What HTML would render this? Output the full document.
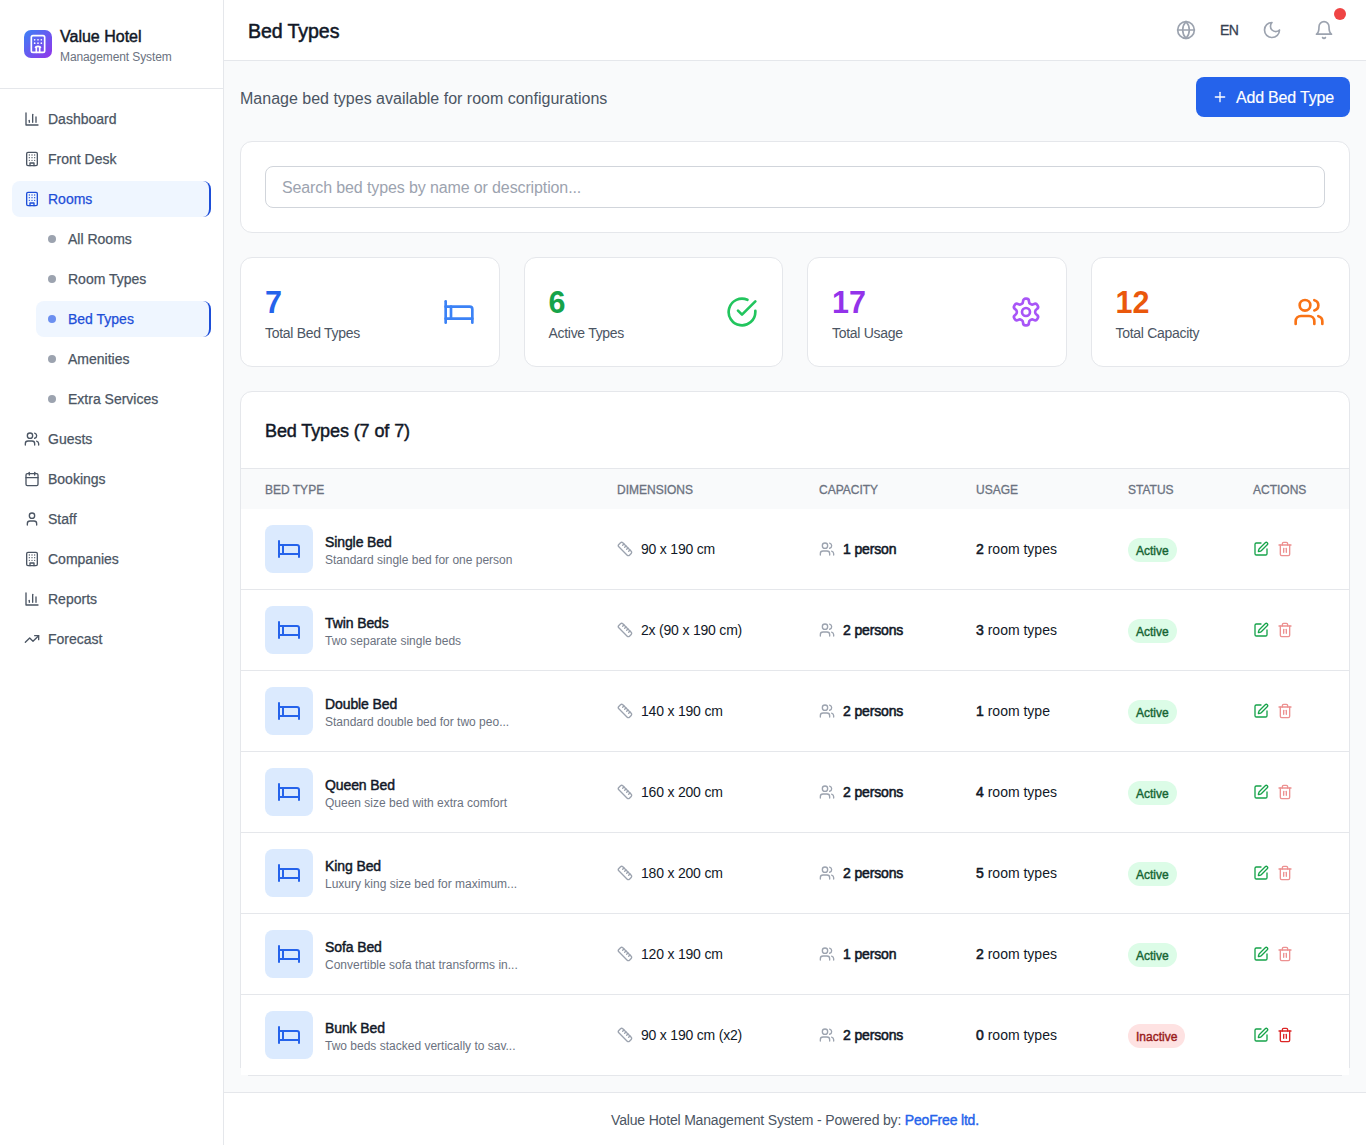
<!DOCTYPE html>
<html><head><meta charset="utf-8"><title>Bed Types</title>
<style>
*{box-sizing:border-box;margin:0;padding:0}
html,body{width:1366px;height:1145px;overflow:hidden}
body{font-family:"Liberation Sans",sans-serif;background:#f9fafb;color:#111827;position:relative}
svg{display:block;fill:none;stroke:currentColor;stroke-width:2;stroke-linecap:round;stroke-linejoin:round}
b,.sb{font-weight:normal;-webkit-text-stroke:0.45px currentColor}
.md{-webkit-text-stroke:0.2px currentColor}
.abs{position:absolute}
#side{position:absolute;left:0;top:0;width:224px;height:1145px;background:#fff;border-right:1px solid #e5e7eb;z-index:2}
#logo{position:absolute;left:0;top:0;width:223px;height:89px;border-bottom:1px solid #e5e7eb}
#lg{left:24px;top:30px;width:28px;height:28px;border-radius:7px;background:linear-gradient(135deg,#3b82f6,#9333ea)}
#lg svg{position:absolute;left:4px;top:4px;width:20px;height:20px;color:#fff}
#lgt1{left:60px;top:27px;font-size:16px;line-height:20px;color:#111827;-webkit-text-stroke:0.45px #111827}
#lgt2{left:60px;top:49px;font-size:12px;line-height:16px;color:#6b7280;letter-spacing:-0.1px}
.nav{position:absolute;left:12px;width:199px;height:36px;border-radius:8px;color:#4b5563;font-size:14px}
.nav svg{position:absolute;left:12px;top:10px;width:16px;height:16px}
.nav span{position:absolute;left:36px;top:0;line-height:36px;white-space:nowrap;-webkit-text-stroke:0.25px currentColor}
.nav.act{background:#eff6ff;color:#1d4ed8;border-right:2px solid #1d4ed8}
.sub{left:36px;width:175px}
.sub i{position:absolute;left:12px;top:14px;width:8px;height:8px;border-radius:50%;background:#9ca3af}
.sub span{left:32px}
.sub.act i{background:#6b8ff0}
#hdr{position:absolute;left:224px;top:0;width:1142px;height:61px;background:#fff;border-bottom:1px solid #e5e7eb}
#ttl{left:24px;top:18px;font-size:19.6px;line-height:26px;color:#111827;letter-spacing:-0.1px;-webkit-text-stroke:0.5px #111827}
.hi{position:absolute;top:20px;width:20px;height:20px;color:#9ca3af}
#en{left:996px;top:20px;font-size:14px;line-height:20px;color:#374151;letter-spacing:-0.5px;-webkit-text-stroke:0.3px #374151}
#dot{left:1110px;top:8px;width:12px;height:12px;border-radius:50%;background:#ef4444}
#desc{left:240px;top:89px;font-size:16px;line-height:20px;color:#4b5563}
#addbtn{left:1196px;top:77px;width:154px;height:40px;border-radius:8px;background:#2563eb;color:#fff;font-size:16px;letter-spacing:-0.2px}
#addbtn svg{position:absolute;left:16px;top:12px;width:16px;height:16px}
#addbtn span{position:absolute;left:40px;top:1px;line-height:40px;white-space:nowrap;-webkit-text-stroke:0.15px #fff}
#search{position:absolute;left:24px;top:24px;width:1060px;height:42px;border:1px solid #d1d5db;border-radius:8px;font-size:16px;line-height:42px;padding-left:16px;color:#9ca3af;letter-spacing:-0.12px}
.card{position:absolute;background:#fff;border:1px solid #e5e7eb;border-radius:12px}
.stat .num{position:absolute;left:24px;top:26px;font-size:30.5px;font-weight:bold;line-height:36px}
.stat .lbl{position:absolute;left:24px;top:65px;font-size:14px;line-height:20px;color:#4b5563;letter-spacing:-0.3px}
.stat svg{position:absolute;right:24px;top:38px;width:32px;height:32px}
#tcard{left:240px;top:391px;width:1110px;height:685px;overflow:hidden;border-radius:12px 12px 0 0}
.cbg{top:1068px;width:8px;height:8px;background:#f9fafb}
.cbg i{position:absolute;left:1px;top:0;width:7px;height:7px;background:#fff}
#tt{height:76px;padding-left:24px;font-size:18px;line-height:78px;color:#111827;letter-spacing:-0.1px;-webkit-text-stroke:0.45px #111827}
table{border-collapse:collapse;width:1108px;table-layout:fixed}
th{height:40px;background:#f9fafb;text-align:left;font-weight:normal;font-size:12px;color:#6b7280;padding-left:24px;border-top:1px solid #e5e7eb;-webkit-text-stroke:0.3px #6b7280;padding-top:3px}
td{height:81px;padding-left:24px;border-top:1px solid #e5e7eb;font-size:14px;color:#111827;vertical-align:middle;white-space:nowrap}
tbody tr:first-child td{border-top:none}
.bt{position:relative;height:48px}
.ib{position:absolute;left:0;top:0;width:48px;height:48px;border-radius:8px;background:#dbeafe;color:#2563eb}
.ib svg{position:absolute;left:12px;top:12px;width:24px;height:24px}
.nm{position:absolute;left:60px;top:7px;font-size:14px;line-height:20px;color:#111827;letter-spacing:-0.1px;-webkit-text-stroke:0.45px #111827}
.ds{position:absolute;left:60px;top:27px;font-size:12px;line-height:16px;color:#6b7280}
.ic{display:flex;align-items:center}
.ic svg{width:16px;height:16px;color:#9ca3af;margin-right:8px}
.ic span{letter-spacing:-0.2px}
.ic b{letter-spacing:-0.15px;-webkit-text-stroke:0.55px #111827}
td>b{-webkit-text-stroke:0.55px #111827}
.badge{display:inline-block;position:relative;top:1px;height:24px;line-height:26px;padding:0 8px;border-radius:12px;font-size:12px;background:#dcfce7;color:#166534;-webkit-text-stroke:0.4px #166534}
.badge.in{background:#fee2e2;color:#991b1b;-webkit-text-stroke:0.4px #991b1b}
.acts{display:flex}
.acts svg{width:16px;height:16px;margin-right:8px}
#foot{position:absolute;left:224px;top:1092px;width:1142px;height:53px;background:#fff;border-top:1px solid #e5e7eb;z-index:1}
#ftxt{position:absolute;left:0;width:100%;top:17px;text-align:center;font-size:14px;line-height:20px;color:#4b5563;letter-spacing:-0.18px}
#ftxt b{color:#2563eb;-webkit-text-stroke:0.4px #2563eb}

</style></head><body>
<div id="side">
 <div id="logo">
  <div class="abs" id="lg"><svg viewBox="0 0 24 24"><path d="M10 22v-6.57"/><path d="M12 11h.01"/><path d="M12 7h.01"/><path d="M14 15.43V22"/><path d="M15 16a5 5 0 0 0-6 0"/><path d="M16 11h.01"/><path d="M16 7h.01"/><path d="M8 11h.01"/><path d="M8 7h.01"/><rect x="4" y="2" width="16" height="20" rx="2"/></svg></div>
  <div class="abs" id="lgt1">Value Hotel</div>
  <div class="abs" id="lgt2">Management System</div>
 </div>
 <div class="nav" style="top:101px"><svg viewBox="0 0 24 24"><path d="M3 3v18h18"/><path d="M18 17V9"/><path d="M13 17V5"/><path d="M8 17v-3"/></svg><span>Dashboard</span></div>
 <div class="nav" style="top:141px"><svg viewBox="0 0 24 24"><rect width="16" height="20" x="4" y="2" rx="2" ry="2"/><path d="M9 22v-4h6v4"/><path d="M8 6h.01"/><path d="M16 6h.01"/><path d="M12 6h.01"/><path d="M12 10h.01"/><path d="M12 14h.01"/><path d="M16 10h.01"/><path d="M16 14h.01"/><path d="M8 10h.01"/><path d="M8 14h.01"/></svg><span>Front Desk</span></div>
 <div class="nav act" style="top:181px"><svg viewBox="0 0 24 24"><rect width="16" height="20" x="4" y="2" rx="2" ry="2"/><path d="M9 22v-4h6v4"/><path d="M8 6h.01"/><path d="M16 6h.01"/><path d="M12 6h.01"/><path d="M12 10h.01"/><path d="M12 14h.01"/><path d="M16 10h.01"/><path d="M16 14h.01"/><path d="M8 10h.01"/><path d="M8 14h.01"/></svg><span>Rooms</span></div>
 <div class="nav sub" style="top:221px"><i></i><span>All Rooms</span></div>
 <div class="nav sub" style="top:261px"><i></i><span>Room Types</span></div>
 <div class="nav sub act" style="top:301px"><i></i><span>Bed Types</span></div>
 <div class="nav sub" style="top:341px"><i></i><span>Amenities</span></div>
 <div class="nav sub" style="top:381px"><i></i><span>Extra Services</span></div>
 <div class="nav" style="top:421px"><svg viewBox="0 0 24 24"><path d="M16 21v-2a4 4 0 0 0-4-4H6a4 4 0 0 0-4 4v2"/><circle cx="9" cy="7" r="4"/><path d="M22 21v-2a4 4 0 0 0-3-3.87"/><path d="M16 3.13a4 4 0 0 1 0 7.75"/></svg><span>Guests</span></div>
 <div class="nav" style="top:461px"><svg viewBox="0 0 24 24"><rect width="18" height="18" x="3" y="4" rx="2" ry="2"/><line x1="16" x2="16" y1="2" y2="6"/><line x1="8" x2="8" y1="2" y2="6"/><line x1="3" x2="21" y1="10" y2="10"/></svg><span>Bookings</span></div>
 <div class="nav" style="top:501px"><svg viewBox="0 0 24 24"><path d="M19 21v-2a4 4 0 0 0-4-4H9a4 4 0 0 0-4 4v2"/><circle cx="12" cy="7" r="4"/></svg><span>Staff</span></div>
 <div class="nav" style="top:541px"><svg viewBox="0 0 24 24"><rect width="16" height="20" x="4" y="2" rx="2" ry="2"/><path d="M9 22v-4h6v4"/><path d="M8 6h.01"/><path d="M16 6h.01"/><path d="M12 6h.01"/><path d="M12 10h.01"/><path d="M12 14h.01"/><path d="M16 10h.01"/><path d="M16 14h.01"/><path d="M8 10h.01"/><path d="M8 14h.01"/></svg><span>Companies</span></div>
 <div class="nav" style="top:581px"><svg viewBox="0 0 24 24"><path d="M3 3v18h18"/><path d="M18 17V9"/><path d="M13 17V5"/><path d="M8 17v-3"/></svg><span>Reports</span></div>
 <div class="nav" style="top:621px"><svg viewBox="0 0 24 24"><polyline points="22 7 13.5 15.5 8.5 10.5 2 17"/><polyline points="16 7 22 7 22 13"/></svg><span>Forecast</span></div>
</div>
<div id="hdr">
 <div class="abs" id="ttl">Bed Types</div>
 <svg class="hi" style="left:952px" viewBox="0 0 24 24"><circle cx="12" cy="12" r="10"/><path d="M12 2a14.5 14.5 0 0 0 0 20 14.5 14.5 0 0 0 0-20"/><path d="M2 12h20"/></svg>
 <div class="abs" id="en">EN</div>
 <svg class="hi" style="left:1038px" viewBox="0 0 24 24"><path d="M12 3a6 6 0 0 0 9 9 9 9 0 1 1-9-9Z"/></svg>
 <svg class="hi" style="left:1090px" viewBox="0 0 24 24"><path d="M6 8a6 6 0 0 1 12 0c0 7 3 9 3 9H3s3-2 3-9"/><path d="M10.3 21a1.94 1.94 0 0 0 3.4 0"/></svg>
 <div class="abs" id="dot"></div>
</div>
<div class="abs" id="desc">Manage bed types available for room configurations</div>
<div class="abs" id="addbtn"><svg viewBox="0 0 24 24"><path d="M5 12h14"/><path d="M12 5v14"/></svg><span>Add Bed Type</span></div>
<div class="card" style="left:240px;top:141px;width:1110px;height:92px"><div id="search">Search bed types by name or description...</div></div>
<div class="card stat" style="left:240px;top:257px;width:259.5px;height:110px"><div class="num" style="color:#2563eb">7</div><div class="lbl">Total Bed Types</div><svg style="color:#3b82f6" viewBox="0 0 24 24"><path d="M2 4v16"/><path d="M2 8h18a2 2 0 0 1 2 2v10"/><path d="M2 17h20"/><path d="M6 8v9"/></svg></div>
<div class="card stat" style="left:523.5px;top:257px;width:259.5px;height:110px"><div class="num" style="color:#16a34a">6</div><div class="lbl">Active Types</div><svg style="color:#22c55e" viewBox="0 0 24 24"><path d="M22 11.08V12a10 10 0 1 1-5.93-9.14"/><polyline points="22 4 12 14.01 9 11.01"/></svg></div>
<div class="card stat" style="left:807px;top:257px;width:259.5px;height:110px"><div class="num" style="color:#9333ea">17</div><div class="lbl">Total Usage</div><svg style="color:#a855f7" viewBox="0 0 24 24"><path d="M12.22 2h-.44a2 2 0 0 0-2 2v.18a2 2 0 0 1-1 1.73l-.43.25a2 2 0 0 1-2 0l-.15-.08a2 2 0 0 0-2.73.73l-.22.38a2 2 0 0 0 .73 2.73l.15.1a2 2 0 0 1 1 1.72v.51a2 2 0 0 1-1 1.74l-.15.09a2 2 0 0 0-.73 2.73l.22.38a2 2 0 0 0 2.73.73l.15-.08a2 2 0 0 1 2 0l.43.25a2 2 0 0 1 1 1.73V20a2 2 0 0 0 2 2h.44a2 2 0 0 0 2-2v-.18a2 2 0 0 1 1-1.73l.43-.25a2 2 0 0 1 2 0l.15.08a2 2 0 0 0 2.73-.73l.22-.39a2 2 0 0 0-.73-2.73l-.15-.08a2 2 0 0 1-1-1.74v-.5a2 2 0 0 1 1-1.74l.15-.09a2 2 0 0 0 .73-2.73l-.22-.38a2 2 0 0 0-2.73-.73l-.15.08a2 2 0 0 1-2 0l-.43-.25a2 2 0 0 1-1-1.73V4a2 2 0 0 0-2-2z"/><circle cx="12" cy="12" r="3"/></svg></div>
<div class="card stat" style="left:1090.5px;top:257px;width:259.5px;height:110px"><div class="num" style="color:#ea580c">12</div><div class="lbl">Total Capacity</div><svg style="color:#f97316" viewBox="0 0 24 24"><path d="M16 21v-2a4 4 0 0 0-4-4H6a4 4 0 0 0-4 4v2"/><circle cx="9" cy="7" r="4"/><path d="M22 21v-2a4 4 0 0 0-3-3.87"/><path d="M16 3.13a4 4 0 0 1 0 7.75"/></svg></div>
<div class="card" id="tcard">
 <div id="tt">Bed Types (7 of 7)</div>
 <table><colgroup><col style="width:352px"><col style="width:202px"><col style="width:157px"><col style="width:152px"><col style="width:125px"><col></colgroup>
 <thead><tr><th>BED TYPE</th><th>DIMENSIONS</th><th>CAPACITY</th><th>USAGE</th><th>STATUS</th><th>ACTIONS</th></tr></thead>
 <tbody>
  <tr><td><div class="bt"><div class="ib"><svg viewBox="0 0 24 24"><path d="M2 4v16"/><path d="M2 8h18a2 2 0 0 1 2 2v10"/><path d="M2 17h20"/><path d="M6 8v9"/></svg></div><div class="nm">Single Bed</div><div class="ds">Standard single bed for one person</div></div></td><td><div class="ic"><svg viewBox="0 0 24 24"><path d="M21.3 15.3a2.4 2.4 0 0 1 0 3.4l-2.6 2.6a2.4 2.4 0 0 1-3.4 0L2.7 8.7a2.41 2.41 0 0 1 0-3.4l2.6-2.6a2.41 2.41 0 0 1 3.4 0Z"/><path d="m14.5 12.5 2-2"/><path d="m11.5 9.5 2-2"/><path d="m8.5 6.5 2-2"/><path d="m17.5 15.5 2-2"/></svg><span>90 x 190 cm</span></div></td><td><div class="ic"><svg viewBox="0 0 24 24"><path d="M16 21v-2a4 4 0 0 0-4-4H6a4 4 0 0 0-4 4v2"/><circle cx="9" cy="7" r="4"/><path d="M22 21v-2a4 4 0 0 0-3-3.87"/><path d="M16 3.13a4 4 0 0 1 0 7.75"/></svg><b>1 person</b></div></td><td><b>2</b> room types</td><td><span class="badge">Active</span></td><td><div class="acts"><span style="color:#16a34a"><svg viewBox="0 0 24 24"><path d="M12 3H5a2 2 0 0 0-2 2v14a2 2 0 0 0 2 2h14a2 2 0 0 0 2-2v-7"/><path d="M18.375 2.625a1 1 0 0 1 3 3l-9.013 9.014a2 2 0 0 1-.853.505l-2.873.84a.5.5 0 0 1-.62-.62l.84-2.873a2 2 0 0 1 .506-.852z"/></svg></span><span style="color:#dc2626;opacity:.5"><svg viewBox="0 0 24 24"><path d="M3 6h18"/><path d="M19 6v14c0 1-1 2-2 2H7c-1 0-2-1-2-2V6"/><path d="M8 6V4c0-1 1-2 2-2h4c1 0 2 1 2 2v2"/><line x1="10" x2="10" y1="11" y2="17"/><line x1="14" x2="14" y1="11" y2="17"/></svg></span></div></td></tr>
  <tr><td><div class="bt"><div class="ib"><svg viewBox="0 0 24 24"><path d="M2 4v16"/><path d="M2 8h18a2 2 0 0 1 2 2v10"/><path d="M2 17h20"/><path d="M6 8v9"/></svg></div><div class="nm">Twin Beds</div><div class="ds">Two separate single beds</div></div></td><td><div class="ic"><svg viewBox="0 0 24 24"><path d="M21.3 15.3a2.4 2.4 0 0 1 0 3.4l-2.6 2.6a2.4 2.4 0 0 1-3.4 0L2.7 8.7a2.41 2.41 0 0 1 0-3.4l2.6-2.6a2.41 2.41 0 0 1 3.4 0Z"/><path d="m14.5 12.5 2-2"/><path d="m11.5 9.5 2-2"/><path d="m8.5 6.5 2-2"/><path d="m17.5 15.5 2-2"/></svg><span>2x (90 x 190 cm)</span></div></td><td><div class="ic"><svg viewBox="0 0 24 24"><path d="M16 21v-2a4 4 0 0 0-4-4H6a4 4 0 0 0-4 4v2"/><circle cx="9" cy="7" r="4"/><path d="M22 21v-2a4 4 0 0 0-3-3.87"/><path d="M16 3.13a4 4 0 0 1 0 7.75"/></svg><b>2 persons</b></div></td><td><b>3</b> room types</td><td><span class="badge">Active</span></td><td><div class="acts"><span style="color:#16a34a"><svg viewBox="0 0 24 24"><path d="M12 3H5a2 2 0 0 0-2 2v14a2 2 0 0 0 2 2h14a2 2 0 0 0 2-2v-7"/><path d="M18.375 2.625a1 1 0 0 1 3 3l-9.013 9.014a2 2 0 0 1-.853.505l-2.873.84a.5.5 0 0 1-.62-.62l.84-2.873a2 2 0 0 1 .506-.852z"/></svg></span><span style="color:#dc2626;opacity:.5"><svg viewBox="0 0 24 24"><path d="M3 6h18"/><path d="M19 6v14c0 1-1 2-2 2H7c-1 0-2-1-2-2V6"/><path d="M8 6V4c0-1 1-2 2-2h4c1 0 2 1 2 2v2"/><line x1="10" x2="10" y1="11" y2="17"/><line x1="14" x2="14" y1="11" y2="17"/></svg></span></div></td></tr>
  <tr><td><div class="bt"><div class="ib"><svg viewBox="0 0 24 24"><path d="M2 4v16"/><path d="M2 8h18a2 2 0 0 1 2 2v10"/><path d="M2 17h20"/><path d="M6 8v9"/></svg></div><div class="nm">Double Bed</div><div class="ds">Standard double bed for two peo...</div></div></td><td><div class="ic"><svg viewBox="0 0 24 24"><path d="M21.3 15.3a2.4 2.4 0 0 1 0 3.4l-2.6 2.6a2.4 2.4 0 0 1-3.4 0L2.7 8.7a2.41 2.41 0 0 1 0-3.4l2.6-2.6a2.41 2.41 0 0 1 3.4 0Z"/><path d="m14.5 12.5 2-2"/><path d="m11.5 9.5 2-2"/><path d="m8.5 6.5 2-2"/><path d="m17.5 15.5 2-2"/></svg><span>140 x 190 cm</span></div></td><td><div class="ic"><svg viewBox="0 0 24 24"><path d="M16 21v-2a4 4 0 0 0-4-4H6a4 4 0 0 0-4 4v2"/><circle cx="9" cy="7" r="4"/><path d="M22 21v-2a4 4 0 0 0-3-3.87"/><path d="M16 3.13a4 4 0 0 1 0 7.75"/></svg><b>2 persons</b></div></td><td><b>1</b> room type</td><td><span class="badge">Active</span></td><td><div class="acts"><span style="color:#16a34a"><svg viewBox="0 0 24 24"><path d="M12 3H5a2 2 0 0 0-2 2v14a2 2 0 0 0 2 2h14a2 2 0 0 0 2-2v-7"/><path d="M18.375 2.625a1 1 0 0 1 3 3l-9.013 9.014a2 2 0 0 1-.853.505l-2.873.84a.5.5 0 0 1-.62-.62l.84-2.873a2 2 0 0 1 .506-.852z"/></svg></span><span style="color:#dc2626;opacity:.5"><svg viewBox="0 0 24 24"><path d="M3 6h18"/><path d="M19 6v14c0 1-1 2-2 2H7c-1 0-2-1-2-2V6"/><path d="M8 6V4c0-1 1-2 2-2h4c1 0 2 1 2 2v2"/><line x1="10" x2="10" y1="11" y2="17"/><line x1="14" x2="14" y1="11" y2="17"/></svg></span></div></td></tr>
  <tr><td><div class="bt"><div class="ib"><svg viewBox="0 0 24 24"><path d="M2 4v16"/><path d="M2 8h18a2 2 0 0 1 2 2v10"/><path d="M2 17h20"/><path d="M6 8v9"/></svg></div><div class="nm">Queen Bed</div><div class="ds">Queen size bed with extra comfort</div></div></td><td><div class="ic"><svg viewBox="0 0 24 24"><path d="M21.3 15.3a2.4 2.4 0 0 1 0 3.4l-2.6 2.6a2.4 2.4 0 0 1-3.4 0L2.7 8.7a2.41 2.41 0 0 1 0-3.4l2.6-2.6a2.41 2.41 0 0 1 3.4 0Z"/><path d="m14.5 12.5 2-2"/><path d="m11.5 9.5 2-2"/><path d="m8.5 6.5 2-2"/><path d="m17.5 15.5 2-2"/></svg><span>160 x 200 cm</span></div></td><td><div class="ic"><svg viewBox="0 0 24 24"><path d="M16 21v-2a4 4 0 0 0-4-4H6a4 4 0 0 0-4 4v2"/><circle cx="9" cy="7" r="4"/><path d="M22 21v-2a4 4 0 0 0-3-3.87"/><path d="M16 3.13a4 4 0 0 1 0 7.75"/></svg><b>2 persons</b></div></td><td><b>4</b> room types</td><td><span class="badge">Active</span></td><td><div class="acts"><span style="color:#16a34a"><svg viewBox="0 0 24 24"><path d="M12 3H5a2 2 0 0 0-2 2v14a2 2 0 0 0 2 2h14a2 2 0 0 0 2-2v-7"/><path d="M18.375 2.625a1 1 0 0 1 3 3l-9.013 9.014a2 2 0 0 1-.853.505l-2.873.84a.5.5 0 0 1-.62-.62l.84-2.873a2 2 0 0 1 .506-.852z"/></svg></span><span style="color:#dc2626;opacity:.5"><svg viewBox="0 0 24 24"><path d="M3 6h18"/><path d="M19 6v14c0 1-1 2-2 2H7c-1 0-2-1-2-2V6"/><path d="M8 6V4c0-1 1-2 2-2h4c1 0 2 1 2 2v2"/><line x1="10" x2="10" y1="11" y2="17"/><line x1="14" x2="14" y1="11" y2="17"/></svg></span></div></td></tr>
  <tr><td><div class="bt"><div class="ib"><svg viewBox="0 0 24 24"><path d="M2 4v16"/><path d="M2 8h18a2 2 0 0 1 2 2v10"/><path d="M2 17h20"/><path d="M6 8v9"/></svg></div><div class="nm">King Bed</div><div class="ds">Luxury king size bed for maximum...</div></div></td><td><div class="ic"><svg viewBox="0 0 24 24"><path d="M21.3 15.3a2.4 2.4 0 0 1 0 3.4l-2.6 2.6a2.4 2.4 0 0 1-3.4 0L2.7 8.7a2.41 2.41 0 0 1 0-3.4l2.6-2.6a2.41 2.41 0 0 1 3.4 0Z"/><path d="m14.5 12.5 2-2"/><path d="m11.5 9.5 2-2"/><path d="m8.5 6.5 2-2"/><path d="m17.5 15.5 2-2"/></svg><span>180 x 200 cm</span></div></td><td><div class="ic"><svg viewBox="0 0 24 24"><path d="M16 21v-2a4 4 0 0 0-4-4H6a4 4 0 0 0-4 4v2"/><circle cx="9" cy="7" r="4"/><path d="M22 21v-2a4 4 0 0 0-3-3.87"/><path d="M16 3.13a4 4 0 0 1 0 7.75"/></svg><b>2 persons</b></div></td><td><b>5</b> room types</td><td><span class="badge">Active</span></td><td><div class="acts"><span style="color:#16a34a"><svg viewBox="0 0 24 24"><path d="M12 3H5a2 2 0 0 0-2 2v14a2 2 0 0 0 2 2h14a2 2 0 0 0 2-2v-7"/><path d="M18.375 2.625a1 1 0 0 1 3 3l-9.013 9.014a2 2 0 0 1-.853.505l-2.873.84a.5.5 0 0 1-.62-.62l.84-2.873a2 2 0 0 1 .506-.852z"/></svg></span><span style="color:#dc2626;opacity:.5"><svg viewBox="0 0 24 24"><path d="M3 6h18"/><path d="M19 6v14c0 1-1 2-2 2H7c-1 0-2-1-2-2V6"/><path d="M8 6V4c0-1 1-2 2-2h4c1 0 2 1 2 2v2"/><line x1="10" x2="10" y1="11" y2="17"/><line x1="14" x2="14" y1="11" y2="17"/></svg></span></div></td></tr>
  <tr><td><div class="bt"><div class="ib"><svg viewBox="0 0 24 24"><path d="M2 4v16"/><path d="M2 8h18a2 2 0 0 1 2 2v10"/><path d="M2 17h20"/><path d="M6 8v9"/></svg></div><div class="nm">Sofa Bed</div><div class="ds">Convertible sofa that transforms in...</div></div></td><td><div class="ic"><svg viewBox="0 0 24 24"><path d="M21.3 15.3a2.4 2.4 0 0 1 0 3.4l-2.6 2.6a2.4 2.4 0 0 1-3.4 0L2.7 8.7a2.41 2.41 0 0 1 0-3.4l2.6-2.6a2.41 2.41 0 0 1 3.4 0Z"/><path d="m14.5 12.5 2-2"/><path d="m11.5 9.5 2-2"/><path d="m8.5 6.5 2-2"/><path d="m17.5 15.5 2-2"/></svg><span>120 x 190 cm</span></div></td><td><div class="ic"><svg viewBox="0 0 24 24"><path d="M16 21v-2a4 4 0 0 0-4-4H6a4 4 0 0 0-4 4v2"/><circle cx="9" cy="7" r="4"/><path d="M22 21v-2a4 4 0 0 0-3-3.87"/><path d="M16 3.13a4 4 0 0 1 0 7.75"/></svg><b>1 person</b></div></td><td><b>2</b> room types</td><td><span class="badge">Active</span></td><td><div class="acts"><span style="color:#16a34a"><svg viewBox="0 0 24 24"><path d="M12 3H5a2 2 0 0 0-2 2v14a2 2 0 0 0 2 2h14a2 2 0 0 0 2-2v-7"/><path d="M18.375 2.625a1 1 0 0 1 3 3l-9.013 9.014a2 2 0 0 1-.853.505l-2.873.84a.5.5 0 0 1-.62-.62l.84-2.873a2 2 0 0 1 .506-.852z"/></svg></span><span style="color:#dc2626;opacity:.5"><svg viewBox="0 0 24 24"><path d="M3 6h18"/><path d="M19 6v14c0 1-1 2-2 2H7c-1 0-2-1-2-2V6"/><path d="M8 6V4c0-1 1-2 2-2h4c1 0 2 1 2 2v2"/><line x1="10" x2="10" y1="11" y2="17"/><line x1="14" x2="14" y1="11" y2="17"/></svg></span></div></td></tr>
  <tr><td><div class="bt"><div class="ib"><svg viewBox="0 0 24 24"><path d="M2 4v16"/><path d="M2 8h18a2 2 0 0 1 2 2v10"/><path d="M2 17h20"/><path d="M6 8v9"/></svg></div><div class="nm">Bunk Bed</div><div class="ds">Two beds stacked vertically to sav...</div></div></td><td><div class="ic"><svg viewBox="0 0 24 24"><path d="M21.3 15.3a2.4 2.4 0 0 1 0 3.4l-2.6 2.6a2.4 2.4 0 0 1-3.4 0L2.7 8.7a2.41 2.41 0 0 1 0-3.4l2.6-2.6a2.41 2.41 0 0 1 3.4 0Z"/><path d="m14.5 12.5 2-2"/><path d="m11.5 9.5 2-2"/><path d="m8.5 6.5 2-2"/><path d="m17.5 15.5 2-2"/></svg><span>90 x 190 cm (x2)</span></div></td><td><div class="ic"><svg viewBox="0 0 24 24"><path d="M16 21v-2a4 4 0 0 0-4-4H6a4 4 0 0 0-4 4v2"/><circle cx="9" cy="7" r="4"/><path d="M22 21v-2a4 4 0 0 0-3-3.87"/><path d="M16 3.13a4 4 0 0 1 0 7.75"/></svg><b>2 persons</b></div></td><td><b>0</b> room types</td><td><span class="badge in">Inactive</span></td><td><div class="acts"><span style="color:#16a34a"><svg viewBox="0 0 24 24"><path d="M12 3H5a2 2 0 0 0-2 2v14a2 2 0 0 0 2 2h14a2 2 0 0 0 2-2v-7"/><path d="M18.375 2.625a1 1 0 0 1 3 3l-9.013 9.014a2 2 0 0 1-.853.505l-2.873.84a.5.5 0 0 1-.62-.62l.84-2.873a2 2 0 0 1 .506-.852z"/></svg></span><span style="color:#dc2626"><svg viewBox="0 0 24 24"><path d="M3 6h18"/><path d="M19 6v14c0 1-1 2-2 2H7c-1 0-2-1-2-2V6"/><path d="M8 6V4c0-1 1-2 2-2h4c1 0 2 1 2 2v2"/><line x1="10" x2="10" y1="11" y2="17"/><line x1="14" x2="14" y1="11" y2="17"/></svg></span></div></td></tr>
 </tbody></table>
</div>
<div class="abs cbg" style="left:240px"><i></i></div><div class="abs cbg" style="left:1342px"><i style="left:0"></i></div>
<div id="foot"><div id="ftxt">Value Hotel Management System - Powered by: <b>PeoFree ltd.</b></div></div>
</body></html>
